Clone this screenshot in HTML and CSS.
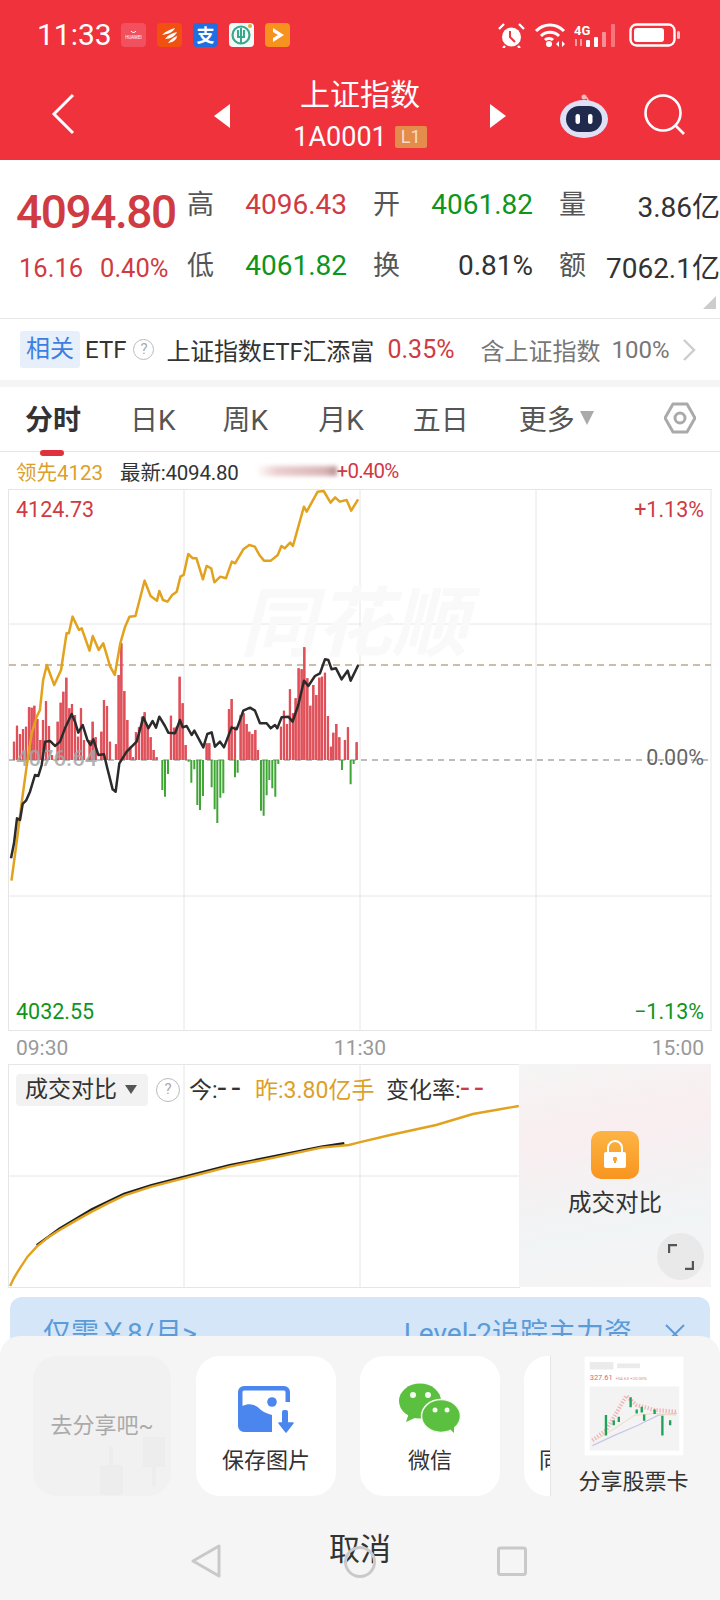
FILE: index.html
```
<!DOCTYPE html>
<html lang="zh-CN">
	<head>
		<meta charset="UTF-8" />
		<title>上证指数</title>
		<link rel="stylesheet" href="styles.css">
	</head>
	<body>
		<header class="top">
			<div class="status">
				<span class="clock">11:33</span>
				<div class="apps">
					<svg class="app" viewBox="0 0 25 24"><rect width="25" height="24" rx="4" fill="#f2505c"/><path d="M10 8c1 2 4 2 5 0" stroke="#fff" fill="none"/><text x="12.5" y="16" class="app-tiny">HUAWEI</text></svg>
					<svg class="app" viewBox="0 0 25 24"><rect width="25" height="24" rx="4" fill="#f2500f"/><path d="M5 12C9 8 14 6 18 5 16 9 12 11 5 12ZM8 16C11 12 15 10 20 9 18 13 14 16 8 16ZM11 20C14 16 17 14 20 13 20 16 17 19 11 20Z" fill="#fff"/></svg>
					<svg class="app" viewBox="0 0 25 24"><rect width="25" height="24" rx="4" fill="#1f6fe3"/><text x="12.5" y="19" class="app-glyph">支</text></svg>
					<svg class="app" viewBox="0 0 25 24"><rect width="25" height="24" rx="4" fill="#f4faf6"/><circle cx="12" cy="12" r="8.5" fill="none" stroke="#3aa78f" stroke-width="2.2"/><path d="M9 7v7h6V7M12 5v15" fill="none" stroke="#3aa78f" stroke-width="2"/><circle cx="21" cy="3" r="2" fill="#d8b23c"/></svg>
					<svg class="app" viewBox="0 0 25 24"><rect width="25" height="24" rx="4" fill="#f8921e"/><path d="M8 5l11 7-11 7v-4l5-3-5-3z" fill="#fff"/></svg>
				</div>
				<div class="sys">
					<svg class="sys-alarm" viewBox="0 0 27 25"><circle cx="13.5" cy="14" r="9.5" fill="#fff"/><path d="M1 6l5-5M26 6l-5-5M7 23l-2 2M20 23l2 2" stroke="#fff" stroke-width="2.4"/><path d="M12 8v6l5 5" fill="none" stroke="#ef3340" stroke-width="2"/></svg>
					<svg class="sys-wifi" viewBox="0 0 32 24"><path d="M2 8C10 0 22 0 30 8M7 13C12 8 20 8 25 13M11 17C13 15 17 15 19 17" fill="none" stroke="#fff" stroke-width="3"/><circle cx="15" cy="21" r="3" fill="#fff"/><path d="M22 21l3-3v6zM31 21l-3-3v6z" fill="#fff"/></svg>
					<svg class="sys-signal" viewBox="0 0 44 24"><text x="0" y="12" class="sig-text">4G</text><path d="M2 16v7M7 16v7" stroke="#f89aa0" stroke-width="2"/><rect x="12" y="17" width="4" height="7" rx="1" fill="#fff"/><rect x="20" y="14" width="4" height="10" rx="1" fill="#fff"/><rect x="28" y="9" width="4" height="15" rx="1" fill="#f98f96"/><rect x="37" y="1" width="4" height="23" rx="1" fill="#f7757d"/></svg>
					<svg class="sys-battery" viewBox="0 0 51 24"><rect x="1.5" y="1.5" width="44" height="21" rx="6" fill="none" stroke="#fff" stroke-width="2.4"/><rect x="5" y="5" width="30" height="14" rx="3" fill="#fff"/><rect x="48" y="8" width="3" height="8" rx="1.5" fill="#f9c3c6"/></svg>
				</div>
			</div>
			<nav class="titlebar">
				<svg class="back" viewBox="0 0 24 42"><path d="M22 2L3 21l19 19" fill="none" stroke="#fff" stroke-width="3"/></svg>
				<span class="tri-left"></span>
				<div class="title-box">
					<div class="title">上证指数</div>
					<div class="code">1A0001 <span class="l1">L1</span></div>
				</div>
				<span class="tri-right"></span>
				<svg class="robot" viewBox="0 0 48 46">
					<circle cx="24" cy="5" r="2.5" fill="#f6b9bd"/>
					<path d="M24 5q4 0 4 4" fill="none" stroke="#f6b9bd" stroke-width="1.5"/>
					<ellipse cx="24" cy="27" rx="24" ry="19" fill="#dfe0f6"/>
					<rect x="6" y="14" width="36" height="26" rx="13" fill="#1f2a4d"/>
					<rect x="15.5" y="22" width="4.5" height="10" rx="2.2" fill="#fff"/>
					<rect x="28" y="22" width="4.5" height="10" rx="2.2" fill="#fff"/>
				</svg>
				<svg class="search" viewBox="0 0 42 42"><circle cx="19" cy="19" r="17.5" fill="none" stroke="#fff" stroke-width="2.6"/><path d="M31 31l9 9" stroke="#fff" stroke-width="2.6"/></svg>
			</nav>
		</header>

		<section class="quote">
			<div class="quote-main">
				<div class="price">4094.80</div>
				<div class="change"><span>16.16</span><span>0.40%</span></div>
			</div>
			<div class="stats">
				<div class="stat"><span class="cn">高</span><b class="red">4096.43</b></div>
				<div class="stat"><span class="cn">开</span><b class="green">4061.82</b></div>
				<div class="stat last"><span class="cn">量</span><b>3.86亿</b></div>
				<div class="stat"><span class="cn">低</span><b class="green">4061.82</b></div>
				<div class="stat"><span class="cn">换</span><b>0.81%</b></div>
				<div class="stat last"><span class="cn">额</span><b>7062.1亿</b></div>
			</div>
			<span class="corner"></span>
		</section>

		<section class="related">
			<span class="rel-tag">相关</span>
			<span class="rel-etf">ETF</span>
			<span class="qmark">?</span>
			<span class="rel-name">上证指数ETF汇添富</span>
			<span class="rel-pct">0.35%</span>
			<span class="rel-grey">含上证指数</span>
			<span class="rel-grey rel-hundred">100%</span>
			<svg class="chev" viewBox="0 0 14 24"><path d="M2 2l10 10L2 22" fill="none" stroke="#ccc" stroke-width="2.4"/></svg>
		</section>

		<div class="tabs">
			<span class="tab tab-on">分时</span>
			<span class="tab t2">日K</span>
			<span class="tab t3">周K</span>
			<span class="tab t4">月K</span>
			<span class="tab t5">五日</span>
			<span class="tab t6">更多<i class="tab-arrow"></i></span>
			<svg class="hex" viewBox="0 0 32 32"><path d="M9 2h14l8 14-8 14H9L1 16z" fill="none" stroke="#aaa" stroke-width="3" stroke-linejoin="round"/><circle cx="16" cy="16" r="5" fill="none" stroke="#aaa" stroke-width="3"/></svg>
		</div>

		<div class="legend">
			<span class="gold">领先4123</span>
			<span class="latest">最新:4094.80</span>
			<span class="smudge"></span>
			<span class="red legend-pct">+0.40%</span>
		</div>

		<div class="chart">
			<svg class="chart-svg" viewBox="0 489 720 542">
				<path d="M8.5 489V1031M184 489V1031M360 489V1031M536 489V1031M711 489V1031M8 489.500H712M8 624H712M8 896H712M8 1030.500H712" stroke="#e6e6e6" fill="none"/>
				<text x="240" y="650" class="watermark">同花顺</text>
				<path d="M9 665H711" stroke="#baa98a" stroke-width="1.5" stroke-dasharray="7 5"/>
				<path d="M9 760H711" stroke="#a8a8a8" stroke-width="1.5" stroke-dasharray="6 5"/>
				<g transform="translate(0,640) scale(0.3333)">
					<path id="upBars" fill="none" stroke="#df5059" stroke-width="6.500" d="M42 360V305M51 360V257M60 360V282M69 360V267M78 360V260M87 360V202M95 360V203M103 360V197M112 360V237M121 360V300M129 360V240M138 360V184M147 360V258M156 360V345M173 360V245M182 360V188M190 360V155M199 360V113M208 360V205M216 360V192M225 360V225M234 360V290M243 360V205M252 360V300M269 360V300M278 360V245M287 360V292M304 360V275M312 360V180M321 360V198M330 360V305M348 360V313M356 360V105M364 360V10M373 360V153M382 360V240M391 360V320M399 360V352M408 360V277M417 360V262M426 360V230M434 360V217M443 360V260M452 360V292M461 360V330M470 360V352M513 360V227M522 360V263M530 360V260M539 360V110M548 360V190M557 360V315M620 360V310M628 360V310M687 360V208M695 360V177M705 360V260M722 360V225M731 360V220M740 360V252M748 360V275M757 360V282M766 360V270M774 360V330M843 360V260M852 360V212M861 360V252M870 360V148M879 360V220M887 360V175M896 360V85M905 360V88M913 360V22M922 360V115M931 360V197M940 360V135M949 360V165M958 360V113M966 360V110M975 360V98M984 360V228M993 360V320M1000 360V278M1009 360V252M1018 360V292M1035 360V300M1044 360V262M1070 360V307"/>
					<use href="#upBars" class="bar-light"/>
					<path fill="none" stroke="#3fa535" stroke-width="6" d="M487 360V450M495 360V470M504 360V402M566 360V365M574 360V428M583 360V388M592 360V495M600 360V510M609 360V468M635 360V442M644 360V508M652 360V549M661 360V473M670 360V460M705 360V412M713 360V398M783 360V512M791 360V527M800 360V466M808 360V420M817 360V445M826 360V470M835 360V372M1026 360V390M1052 360V433M1061 360V372"/>
				</g>
				<text x="16" y="766" class="zero-left">4076.64</text>
				<g transform="translate(0,390) scale(0.4591,0.3333)">
					<path fill="none" stroke="#e2a21e" stroke-width="2.500" vector-effect="non-scaling-stroke" stroke-linejoin="round" d="M25 1472L36 1360L47 1240L58 1130L69 1030L80 980L87 960L94 870L102 825L118 885L133 840L145 730L150 730L158 680L172 720L178 715L195 782L202 738L215 780L225 760L240 830L250 855L262 760L272 712L282 680L295 678L315 572L328 618L342 632L347 603L355 630L365 635L375 615L385 605L393 560L400 555L410 492L420 505L428 505L442 568L450 528L460 535L467 577L480 560L492 565L505 515L512 520L530 478L543 465L555 470L565 495L575 512L590 512L605 495L613 468L620 475L632 458L638 468L662 350L668 365L680 335L692 305L705 303L720 338L730 322L740 335L755 330L765 362L780 328"/>
				</g>
				<g transform="translate(0,640) scale(0.3333)">
					<path fill="none" stroke="#2b2b2b" stroke-width="7.500" stroke-linejoin="round" d="M33 655L42 610L51 535L60 540L68 492L78 482L90 455L105 405L115 408L125 375L135 305L150 303L165 318L180 305L195 265L215 222L225 245L235 278L248 255L262 300L272 315L280 298L295 345L312 343L322 385L338 448L347 455L358 370L380 335L410 305L430 232L445 265L458 243L468 263L478 230L495 258L505 278L525 280L540 240L548 262L560 258L575 285L583 272L610 322L622 282L635 277L645 320L660 305L672 322L695 262L710 268L730 212L750 203L765 212L780 250L800 250L812 265L825 255L832 265L845 232L865 230L878 245L895 195L912 122L925 138L945 108L960 100L975 58L985 60L995 88L1008 85L1025 118L1043 92L1052 122L1075 75"/>
				</g>
			</svg>
			<span class="axis-label red lab-tl">4124.73</span>
			<span class="axis-label red lab-tr">+1.13%</span>
			<span class="axis-label lab-mid">0.00%</span>
			<span class="axis-label green lab-bl">4032.55</span>
			<span class="axis-label green lab-br">−1.13%</span>
		</div>

		<div class="times"><span>09:30</span><span>11:30</span><span>15:00</span></div>

		<div class="volume">
			<svg class="volume-svg" viewBox="0 1064 720 224">
				<path d="M8.500 1064V1288M184 1064V1288M360 1064V1288M8 1064.500H520M8 1176H520M8 1287.500H520" stroke="#e6e6e6" fill="none"/>
				<g transform="translate(0,1030) scale(0.4591,0.3333)">
					<path fill="none" stroke="#1e1e1e" stroke-width="2.500" vector-effect="non-scaling-stroke" d="M80 646L130 596L200 538L270 492L330 466L400 441L500 406L600 378L700 350L750 340"/>
					<path fill="none" stroke="#e2a21e" stroke-width="2.400" vector-effect="non-scaling-stroke" d="M22 768L30 745L40 722L60 680L80 650L105 622L130 600L165 572L200 545L235 520L270 497L330 470L400 445L500 410L600 382L700 353L760 345L780 338L850 315L950 285L1030 252L1130 228"/>
				</g>
			</svg>
			<div class="vol-head">
				<span class="vol-select">成交对比<i class="vol-arrow"></i></span>
				<span class="qmark vol-q">?</span>
				<span class="vol-today">今:<em class="dash">--</em></span>
				<span class="gold vol-yest">昨:3.80亿手</span>
				<span class="vol-rate">变化率:<em class="dash red">--</em></span>
			</div>
			<div class="vol-lock">
				<svg class="lock" viewBox="0 0 48 48"><defs><linearGradient id="lockBg" x1="0" y1="0" x2="0" y2="1"><stop offset="0" stop-color="#fdb445"/><stop offset="1" stop-color="#f8951f"/></linearGradient></defs><rect width="48" height="48" rx="10" fill="url(#lockBg)"/><path d="M17 22v-5a7 7 0 0 1 14 0v5" fill="none" stroke="#fff" stroke-width="2"/><rect x="13" y="21" width="22" height="16" rx="2" fill="#fff"/><circle cx="24" cy="28" r="2.200" fill="#f8a52c"/><path d="M24 28v4" stroke="#f8a52c" stroke-width="2"/></svg>
				<span class="lock-label">成交对比</span>
				<span class="expand"><svg viewBox="0 0 26 26"><path d="M1 9V1H9M25 17V25H17" fill="none" stroke="#555" stroke-width="2.400"/></svg></span>
			</div>
		</div>

		<div class="promo">
			<span>仅需￥8/月&gt;</span>
			<span class="promo-right">Level-2追踪主力资</span>
			<svg class="promo-x" viewBox="0 0 20 20"><path d="M1 1l18 18M19 1L1 19" stroke="#5b9bd8" stroke-width="2"/></svg>
		</div>

		<div class="sheet">
			<div class="share-row">
				<div class="share-list">
					<div class="card card-empty">
						<svg class="ghost" viewBox="0 0 138 140"><path d="M67 109h23v30H67zM76 90h4v19h-4zM110 81h22v30h-22zM119 111h4v19h-4z" fill="#ededed"/></svg>
						<span class="empty-text">去分享吧~</span>
					</div>
					<div class="card">
						<svg class="card-icon" viewBox="0 0 56 48">
							<path fill="#4a86ee" d="M6 0H46a6 6 0 0 1 6 6V16H47.500V6a1.500 1.500 0 0 0-1.500-1.500H6A1.500 1.500 0 0 0 4.500 6V20C12 16 18 19 23 24 27 27 31 28 34 29V46H6a6 6 0 0 1-6-6V6a6 6 0 0 1 6-6Z"/>
							<circle cx="34" cy="16" r="4.800" fill="#4a86ee"/>
							<rect x="44" y="24" width="6" height="14" rx="2" fill="#4a86ee"/>
							<path d="M41 37h14l-7 9z" fill="#4a86ee" stroke="#4a86ee" stroke-width="1.500" stroke-linejoin="round"/>
						</svg>
						<span class="card-label">保存图片</span>
					</div>
					<div class="card">
						<svg class="card-icon icon-wechat" viewBox="0 0 64 50">
							<ellipse cx="22" cy="18" rx="21" ry="17.500" fill="#5bbf3f"/>
							<path d="M11 30L8 39L19 34Z" fill="#5bbf3f"/>
							<ellipse cx="43" cy="33" rx="19.500" ry="16.500" fill="#5bbf3f" stroke="#f3fbef" stroke-width="1.500"/>
							<path d="M50 44L56 50L56 41Z" fill="#5bbf3f"/>
							<circle cx="15" cy="12" r="3" fill="#f3fbef"/><circle cx="30" cy="12" r="3" fill="#f3fbef"/>
							<circle cx="37" cy="27" r="2.500" fill="#f3fbef"/><circle cx="49" cy="27" r="2.500" fill="#f3fbef"/>
						</svg>
						<span class="card-label">微信</span>
					</div>
					<div class="card card-cut"><span class="card-label">同</span></div>
				</div>
				<div class="share-side">
					<svg class="preview" viewBox="40 20 296 296">
						<rect x="40" y="20" width="296" height="296" fill="#fff" stroke="#ececec" stroke-width="2"/>
						<rect x="57" y="38" width="70" height="22" fill="#ebebeb"/>
						<rect x="138" y="42" width="68" height="14" fill="#ebebeb"/>
						<text x="57" y="92" class="pv-num">327.61</text>
						<text x="133" y="90" class="pv-small">+54.63 +20.00%</text>
						<rect x="57" y="110" width="265" height="190" fill="#f3f3f3"/>
						<path d="M65 270L105 240L135 190L165 138L195 165L250 180L315 185" fill="none" stroke="#f2b3b8" stroke-width="12" stroke-dasharray="4 5"/>
						<path d="M65 285L130 255L200 225L260 195L315 190" fill="none" stroke="#c9c6e6" stroke-width="4"/>
						<path d="M80 265L130 235L190 195L250 190L312 195" fill="none" stroke="#efdcc0" stroke-width="3"/>
						<path d="M105 195V255M128 210V225M143 200V215M178 142V172M196 178V190M211 170V187M218 193V212M249 178V192M272 197V255M295 210V225" stroke="#1fa35a" stroke-width="7" fill="none"/>
					</svg>
					<span class="card-label">分享股票卡</span>
				</div>
			</div>
			<div class="cancel">取消</div>
			<svg class="sysnav" viewBox="0 1540 720 44">
				<path d="M219 1546V1576L193 1561Z" fill="none" stroke="#c9c9c9" stroke-width="3" stroke-linejoin="round"/>
				<circle cx="360" cy="1562" r="14.500" fill="none" stroke="#c9c9c9" stroke-width="3"/>
				<rect x="498.500" y="1548" width="27" height="26.500" rx="2" fill="none" stroke="#c9c9c9" stroke-width="3"/>
			</svg>
		</div>
	</body>
</html>
```

FILE: styles.css
```
* {
	box-sizing: border-box;
}
body {
	margin: 0;
	width: 720px;
	height: 1600px;
	overflow: hidden;
	position: relative;
	background: #fff;
	color: #333;
	font-family: Roboto, "Noto Sans CJK SC", sans-serif;
}
svg {
	display: block;
	flex-shrink: 0;
}
.red {
	color: #d03a42;
}
.green {
	color: #0d951c;
}
.gold {
	color: #dca02a;
}

/* top red bar */
.top {
	height: 160px;
	background: #f0323d;
	color: #fff;
}
.status {
	height: 70px;
	display: flex;
	align-items: center;
	padding: 0 40px 0 37px;
}
.clock {
	font-size: 30px;
	line-height: 1;
	width: 73px;
}
.apps {
	display: flex;
	gap: 11px;
	margin-left: 11px;
}
.app {
	width: 25px;
	height: 24px;
}
.app-tiny {
	font-size: 4.500px;
	fill: #fff;
	text-anchor: middle;
}
.app-glyph {
	font-size: 18px;
	font-weight: 700;
	fill: #fff;
	text-anchor: middle;
}
.sys {
	margin-left: auto;
	display: flex;
	align-items: center;
}
.sys-alarm {
	width: 27px;
	height: 25px;
}
.sys-wifi {
	width: 32px;
	height: 24px;
	margin-left: 9px;
}
.sys-signal {
	width: 44px;
	height: 24px;
	margin-left: 8px;
}
.sig-text {
	font-size: 13px;
	font-weight: 700;
	fill: #fff;
}
.sys-battery {
	width: 51px;
	height: 24px;
	margin-left: 11px;
}
.titlebar {
	height: 90px;
	display: flex;
	align-items: center;
	padding-left: 51px;
}
.back {
	width: 24px;
	height: 42px;
	margin-top: -2px;
}
.tri-left,
.tri-right {
	width: 0;
	height: 0;
	border-top: 12px solid transparent;
	border-bottom: 12px solid transparent;
	margin-top: 2px;
}
.tri-left {
	border-right: 16px solid #fff;
	margin-left: 139px;
}
.tri-right {
	border-left: 16px solid #fff;
}
.title-box {
	width: 260px;
	text-align: center;
	margin-top: -4px;
}
.title {
	font-size: 30px;
	line-height: 40px;
}
.code {
	font-size: 27px;
	line-height: 30px;
	margin-top: 7px;
	display: flex;
	justify-content: center;
	align-items: center;
	gap: 8px;
}
.l1 {
	background: #e38c4c;
	color: #f7dcc4;
	font-size: 18px;
	line-height: 22px;
	width: 32px;
	border-radius: 2px;
}
.robot {
	width: 48px;
	height: 46px;
	margin-left: 54px;
}
.search {
	width: 42px;
	height: 42px;
	margin-left: 36px;
}

/* price block */
.quote {
	height: 159px;
	display: flex;
	position: relative;
	border-bottom: 1px solid #e8e8e8;
}
.quote-main {
	width: 187px;
	padding-left: 16px;
}
.price {
	font-size: 46px;
	font-weight: 500;
	letter-spacing: -1.400px;
	line-height: 50px;
	color: #d03a42;
	margin-top: 27px;
}
.change {
	display: flex;
	gap: 17px;
	padding-left: 3px;
	margin-top: 13px;
	font-size: 25.500px;
	line-height: 36px;
	color: #d03a42;
}
.stats {
	width: 533px;
	display: grid;
	grid-template-columns: 186px 186px 161px;
	grid-auto-rows: 61px;
	padding-top: 12px;
}
.stat {
	display: flex;
	justify-content: space-between;
	align-items: center;
	padding-right: 26px;
}
.stat.last {
	padding-right: 0;
}
.cn {
	font-size: 27px;
	color: #555;
}
.stat b {
	font-weight: 400;
	font-size: 28px;
	position: relative;
	top: 2px;
}
.corner {
	position: absolute;
	right: 4px;
	top: 136px;
	border-left: 13px solid transparent;
	border-bottom: 13px solid #ccc;
}

/* related row */
.related {
	height: 68px;
	padding: 0 0 0 20px;
	display: flex;
	align-items: center;
	border-bottom: 7px solid #f5f5f5;
	font-size: 24px;
}
.rel-tag {
	width: 60px;
	height: 37px;
	line-height: 37px;
	background: #e7effb;
	color: #3d7fe0;
	text-align: center;
	border-radius: 3px;
	font-size: 24px;
}
.rel-etf {
	margin-left: 5px;
}
.qmark {
	width: 21px;
	height: 21px;
	border: 1.500px solid #bbb;
	border-radius: 50%;
	color: #aaa;
	font-size: 15px;
	line-height: 18px;
	text-align: center;
	margin-left: 7px;
}
.rel-name {
	margin-left: 12px;
	width: 208px;
	white-space: nowrap;
	letter-spacing: -0.200px;
}
.rel-pct {
	color: #d03a42;
	margin-left: 13px;
	font-size: 25px;
	width: 67px;
}
.rel-grey {
	color: #777;
	margin-left: 26px;
}
.rel-hundred {
	margin-left: 11px;
}
.chev {
	width: 14px;
	height: 24px;
	margin-left: 12px;
}

/* period tabs */
.tabs {
	height: 65px;
	position: relative;
	border-bottom: 1px solid #e6e6e6;
	display: flex;
	align-items: center;
	padding-left: 25px;
	padding-bottom: 3px;
	font-size: 28px;
	color: #555;
}
.tab {
	white-space: nowrap;
}
.tab-on {
	font-weight: 700;
	color: #333;
	position: relative;
}
.tab-on::after {
	content: "";
	position: absolute;
	left: 15px;
	bottom: -18px;
	width: 24px;
	height: 6px;
	border-radius: 3px;
	background: #e0323c;
}
.t2 {
	margin-left: 49px;
}
.t3 {
	margin-left: 47px;
}
.t4 {
	margin-left: 50px;
}
.t5 {
	margin-left: 49px;
}
.t6 {
	margin-left: 50px;
	display: flex;
	align-items: center;
}
.tab-arrow {
	margin-left: 5px;
	border-left: 7.500px solid transparent;
	border-right: 7.500px solid transparent;
	border-top: 14px solid #aaa;
}
.hex {
	width: 32px;
	height: 32px;
	margin-left: auto;
	margin-right: 24px;
}

/* legend above chart */
.legend {
	height: 37px;
	display: flex;
	align-items: center;
	padding-left: 16px;
	font-size: 20.500px;
	white-space: nowrap;
}
.latest {
	margin-left: 17px;
	letter-spacing: -0.200px;
}
.smudge {
	width: 81px;
	height: 10px;
	margin-left: 17px;
	background: linear-gradient(90deg, #fff, #eccfd0 25%, #d8b4b6 85%, #b89092);
	filter: blur(2px);
}
.legend-pct {
	letter-spacing: -0.800px;
}

/* main chart */
.chart {
	height: 542px;
	position: relative;
}
.chart-svg {
	width: 720px;
	height: 542px;
}
.watermark {
	font-size: 76px;
	font-weight: 700;
	font-style: italic;
	fill: #f9f9f9;
}
.zero-left {
	font-size: 22px;
	font-weight: 500;
	fill: #a5a5a5;
	fill-opacity: 0.85;
}
.bar-light {
	stroke: #f7999e;
	stroke-width: 3;
}
.axis-label {
	position: absolute;
	font-size: 21.500px;
	line-height: 26px;
}
.lab-tl {
	left: 16px;
	top: 8px;
}
.lab-tr {
	right: 16px;
	top: 8px;
}
.lab-mid {
	right: 16px;
	top: 256px;
	color: #666;
}
.lab-bl {
	left: 16px;
	top: 510px;
}
.lab-br {
	right: 16px;
	top: 510px;
}

/* time axis */
.times {
	height: 33px;
	display: flex;
	justify-content: space-between;
	align-items: center;
	padding: 1px 16px 0;
	font-size: 21px;
	color: #999;
}

/* volume compare chart */
.volume {
	height: 224px;
	position: relative;
}
.volume-svg {
	width: 720px;
	height: 224px;
}
.vol-head {
	position: absolute;
	left: 16px;
	top: 8px;
	display: flex;
	align-items: center;
	font-size: 23px;
	line-height: 32px;
	white-space: nowrap;
}
.vol-select {
	width: 132px;
	height: 32px;
	padding-left: 9px;
	background: #f2f2f2;
	border-radius: 4px;
	display: flex;
	align-items: center;
}
.vol-arrow {
	margin-left: 8px;
	border-left: 6px solid transparent;
	border-right: 6px solid transparent;
	border-top: 9px solid #555;
}
.vol-q {
	width: 24px;
	height: 24px;
	line-height: 21px;
	margin-left: 8px;
}
.vol-today {
	margin-left: 9px;
	width: 57px;
	padding-top: 3px;
}
.vol-yest {
	margin-left: 9px;
	width: 120px;
	padding-top: 3px;
}
.vol-rate {
	margin-left: 11px;
	padding-top: 3px;
}
.dash {
	font-style: normal;
	font-size: 32px;
	line-height: 20px;
	letter-spacing: 5px;
}
.vol-lock {
	position: absolute;
	left: 519px;
	top: 0;
	width: 192px;
	height: 223px;
	padding-top: 67px;
	display: flex;
	flex-direction: column;
	align-items: center;
	background: linear-gradient(170deg, #f5f5f5 0%, #f9eef0 30%, #f1f4f5 70%, #f7f4f5 100%);
}
.lock {
	width: 48px;
	height: 48px;
}
.lock-label {
	font-size: 23.500px;
	line-height: 32px;
	margin-top: 8px;
}
.expand {
	position: absolute;
	right: 7px;
	bottom: 7px;
	width: 47px;
	height: 47px;
	border-radius: 50%;
	background: #e9e9e9;
	display: flex;
	align-items: center;
	justify-content: center;
}
.expand svg {
	width: 26px;
	height: 26px;
}

/* promo strip, mostly hidden by the sheet */
.promo {
	height: 80px;
	margin: 9px 10px 0;
	padding: 21px 25px 0 33px;
	background: #d6e6f9;
	border-radius: 12px;
	display: flex;
	align-items: flex-start;
	font-size: 28px;
	line-height: 32px;
	color: #5b9bd8;
	white-space: nowrap;
}
.promo-right {
	margin-left: auto;
}
.promo-x {
	width: 20px;
	height: 20px;
	margin: 6px 0 0 33px;
}

/* share sheet */
.sheet {
	position: absolute;
	left: 0;
	right: 0;
	top: 1336px;
	height: 264px;
	background: #f5f5f5;
	border-radius: 20px 20px 0 0;
	padding-top: 20px;
}
.share-row {
	display: flex;
	height: 140px;
}
.share-list {
	width: 550px;
	padding-left: 33px;
	display: flex;
	gap: 24px;
	overflow: hidden;
}
.card {
	width: 140px;
	height: 140px;
	flex-shrink: 0;
	background: #fff;
	border-radius: 24px;
	padding-top: 30px;
	display: flex;
	flex-direction: column;
	align-items: center;
	position: relative;
}
.card-empty {
	width: 138px;
	padding-top: 51px;
	margin-right: 1px;
	background: #f1f1f1;
	overflow: hidden;
}
.empty-text {
	color: #aaa;
	font-size: 22px;
	white-space: nowrap;
	position: relative;
}
.ghost {
	position: absolute;
	left: 0;
	top: 0;
	width: 138px;
	height: 140px;
}
.card-icon {
	width: 56px;
	height: 48px;
}
.card-icon + .card-label {
	margin-top: 12px;
}
.icon-wechat {
	width: 64px;
	height: 50px;
	margin-top: -3px;
}
.icon-wechat + .card-label {
	margin-top: 13px;
}
.card-label {
	font-size: 22px;
	line-height: 30px;
	white-space: nowrap;
}
.card-cut {
	padding: 90px 0 0 15px;
	align-items: flex-start;
}
.share-side {
	width: 166px;
	border-left: 1px solid #e4e4e4;
	display: flex;
	flex-direction: column;
	align-items: center;
}
.preview {
	width: 100px;
	height: 100px;
}
.share-side .card-label {
	margin-top: 11px;
}
.pv-num {
	font-size: 22px;
	fill: #cf6a73;
}
.pv-small {
	font-size: 13px;
	fill: #d98a90;
}
.cancel {
	margin-top: 36px;
	font-size: 31px;
	line-height: 36px;
	text-align: center;
	position: relative;
}
.sysnav {
	position: absolute;
	left: 0;
	top: 204px;
	width: 720px;
	height: 44px;
}
```
